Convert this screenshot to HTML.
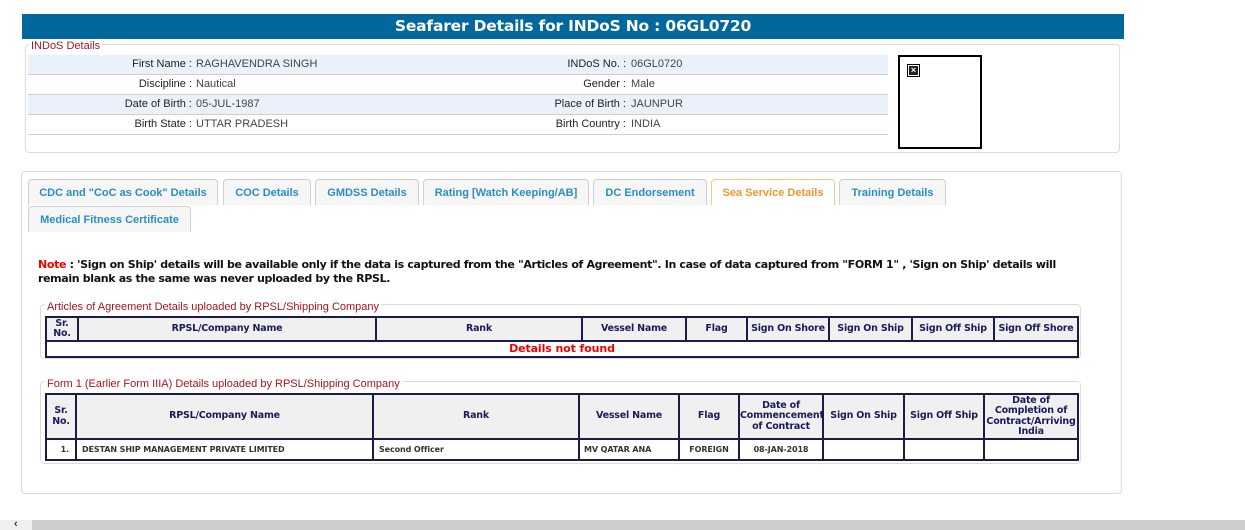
<!DOCTYPE html>
<html><head><style>
*{box-sizing:border-box;margin:0;padding:0}
body{width:1245px;height:530px;background:#fff;position:relative;overflow:hidden;font-family:"Liberation Sans",Arial,sans-serif}
.abs{position:absolute}
.hdr{left:22px;top:14px;width:1102px;height:25px;background:#02679b;color:#fff;font:bold 15.5px "DejaVu Sans",Verdana,sans-serif;text-align:center;line-height:25px;letter-spacing:-0.2px}
.fs{border:1px solid #dcdcdc;border-radius:4px}
.lg{background:#fff;color:#a8141e;font-size:11px;padding:0 2px;line-height:12px}
.row{left:28px;width:860px;height:20px;border-bottom:1px solid #cfcfcf;font-size:11px;line-height:19px;color:#444}
.row.a{background:#e9f1fb}
.row span{position:absolute;white-space:nowrap}
.l1{right:696px;text-align:right;color:#222}
.v1{left:168px}
.l2{right:262px;text-align:right;color:#222}
.v2{left:603px}
.tab{height:26px;background:#f6f6f6;border:1px solid #cfcfcf;border-bottom:none;border-radius:4px 4px 0 0;color:#2b8dc3;font-weight:bold;font-size:11px;text-align:center;line-height:26px}
.tab.act{background:#fff;border-color:#f2cd78;color:#ee962e}
.note{left:38px;top:258px;width:1048px;font:bold 11px "DejaVu Sans",Verdana,sans-serif;line-height:13.5px;color:#111;letter-spacing:-0.35px}
table{position:absolute;border-collapse:collapse;table-layout:fixed;font-family:"DejaVu Sans",Verdana,sans-serif;font-weight:bold}
td,th{border:2px solid #1b1b48;padding:0;overflow:hidden;white-space:nowrap}
th{background:#f0f0f0;color:#1b1b5c;font-size:9.5px;line-height:10.5px;letter-spacing:-0.2px}
td{font-size:8px;color:#333;letter-spacing:-0.1px}
</style></head><body>
<div class="abs hdr">Seafarer Details for INDoS No : 06GL0720</div>

<div class="abs fs" style="left:25px;top:44px;width:1095px;height:109px"></div>
<div class="abs lg" style="left:29px;top:40px">INDoS Details</div>
<div class="abs row a" style="top:55px"><span class="l1">First Name :</span><span class="v1">RAGHAVENDRA SINGH</span><span class="l2">INDoS No. :</span><span class="v2">06GL0720</span></div>
<div class="abs row" style="top:75px"><span class="l1">Discipline :</span><span class="v1">Nautical</span><span class="l2">Gender :</span><span class="v2">Male</span></div>
<div class="abs row a" style="top:95px"><span class="l1">Date of Birth :</span><span class="v1">05-JUL-1987</span><span class="l2">Place of Birth :</span><span class="v2">JAUNPUR</span></div>
<div class="abs row" style="top:115px"><span class="l1">Birth State :</span><span class="v1">UTTAR PRADESH</span><span class="l2">Birth Country :</span><span class="v2">INDIA</span></div>
<div class="abs" style="left:898px;top:55px;width:84px;height:94px;border:2px solid #000;background:#fff"></div>
<div class="abs" style="left:907px;top:64px;width:13px;height:13px;border:1px solid #000;background:#fff"><div style="position:absolute;left:1px;top:1px;width:9px;height:9px;background:#222;color:#fff;font-size:9px;line-height:9px;text-align:center;font-weight:bold">×</div></div>

<div class="abs fs" style="left:21px;top:171px;width:1101px;height:323px"></div>
<div class="abs tab" style="left:28px;top:179px;width:190px">CDC and "CoC as Cook" Details</div>
<div class="abs tab" style="left:223px;top:179px;width:88px">COC Details</div>
<div class="abs tab" style="left:315px;top:179px;width:104px">GMDSS Details</div>
<div class="abs tab" style="left:423px;top:179px;width:166px">Rating [Watch Keeping/AB]</div>
<div class="abs tab" style="left:593px;top:179px;width:114px">DC Endorsement</div>
<div class="abs tab act" style="left:711px;top:179px;width:124px">Sea Service Details</div>
<div class="abs tab" style="left:839px;top:179px;width:107px">Training Details</div>
<div class="abs tab" style="left:28px;top:206px;width:163px">Medical Fitness Certificate</div>

<div class="abs note"><span style="color:#e00">Note</span> : 'Sign on Ship' details will be available only if the data is captured from the "Articles of Agreement". In case of data captured from "FORM 1" , 'Sign on Ship' details will remain blank as the same was never uploaded by the RPSL.</div>

<div class="abs fs" style="left:40px;top:304px;width:1041px;height:55px"></div>
<div class="abs lg" style="left:45px;top:301px">Articles of Agreement Details uploaded by RPSL/Shipping Company</div>
<table style="left:45px;top:316px;width:1032px">
<colgroup><col style="width:32px"><col style="width:298px"><col style="width:206px"><col style="width:104px"><col style="width:61px"><col style="width:82px"><col style="width:83px"><col style="width:82px"><col style="width:84px"></colgroup>
<tr style="height:24px"><th>Sr.<br>No.</th><th>RPSL/Company Name</th><th>Rank</th><th>Vessel Name</th><th>Flag</th><th>Sign On Shore</th><th>Sign On Ship</th><th>Sign Off Ship</th><th>Sign Off Shore</th></tr>
<tr style="height:16px"><td colspan="9" style="text-align:center;color:#e00;font-size:11px;line-height:12px">Details not found</td></tr>
</table>

<div class="abs fs" style="left:40px;top:381px;width:1041px;height:83px"></div>
<div class="abs lg" style="left:45px;top:378px">Form 1 (Earlier Form IIIA) Details uploaded by RPSL/Shipping Company</div>
<table style="left:45px;top:393px;width:1032px">
<colgroup><col style="width:30px"><col style="width:297px"><col style="width:206px"><col style="width:100px"><col style="width:60px"><col style="width:84px"><col style="width:81px"><col style="width:80px"><col style="width:94px"></colgroup>
<tr style="height:45px"><th>Sr.<br>No.</th><th>RPSL/Company Name</th><th>Rank</th><th>Vessel Name</th><th>Flag</th><th>Date of<br>Commencement<br>of Contract</th><th>Sign On Ship</th><th>Sign Off Ship</th><th>Date of<br>Completion of<br>Contract/Arriving<br>India</th></tr>
<tr style="height:21px"><td style="text-align:right;padding-right:6px">1.</td><td style="padding-left:5px">DESTAN SHIP MANAGEMENT PRIVATE LIMITED</td><td style="padding-left:5px">Second Officer</td><td style="padding-left:4px">MV QATAR ANA</td><td style="text-align:center">FOREIGN</td><td style="text-align:center">08-JAN-2018</td><td></td><td></td><td></td></tr>
</table>

<div class="abs" style="left:0;top:520px;width:1245px;height:10px;background:#f0f0f0"></div>
<div class="abs" style="left:32px;top:520px;width:1213px;height:10px;background:#cdcdcd"></div>
<div class="abs" style="left:14px;top:519px;font-size:11px;color:#333;line-height:11px;font-weight:bold">&lsaquo;</div>
</body></html>
